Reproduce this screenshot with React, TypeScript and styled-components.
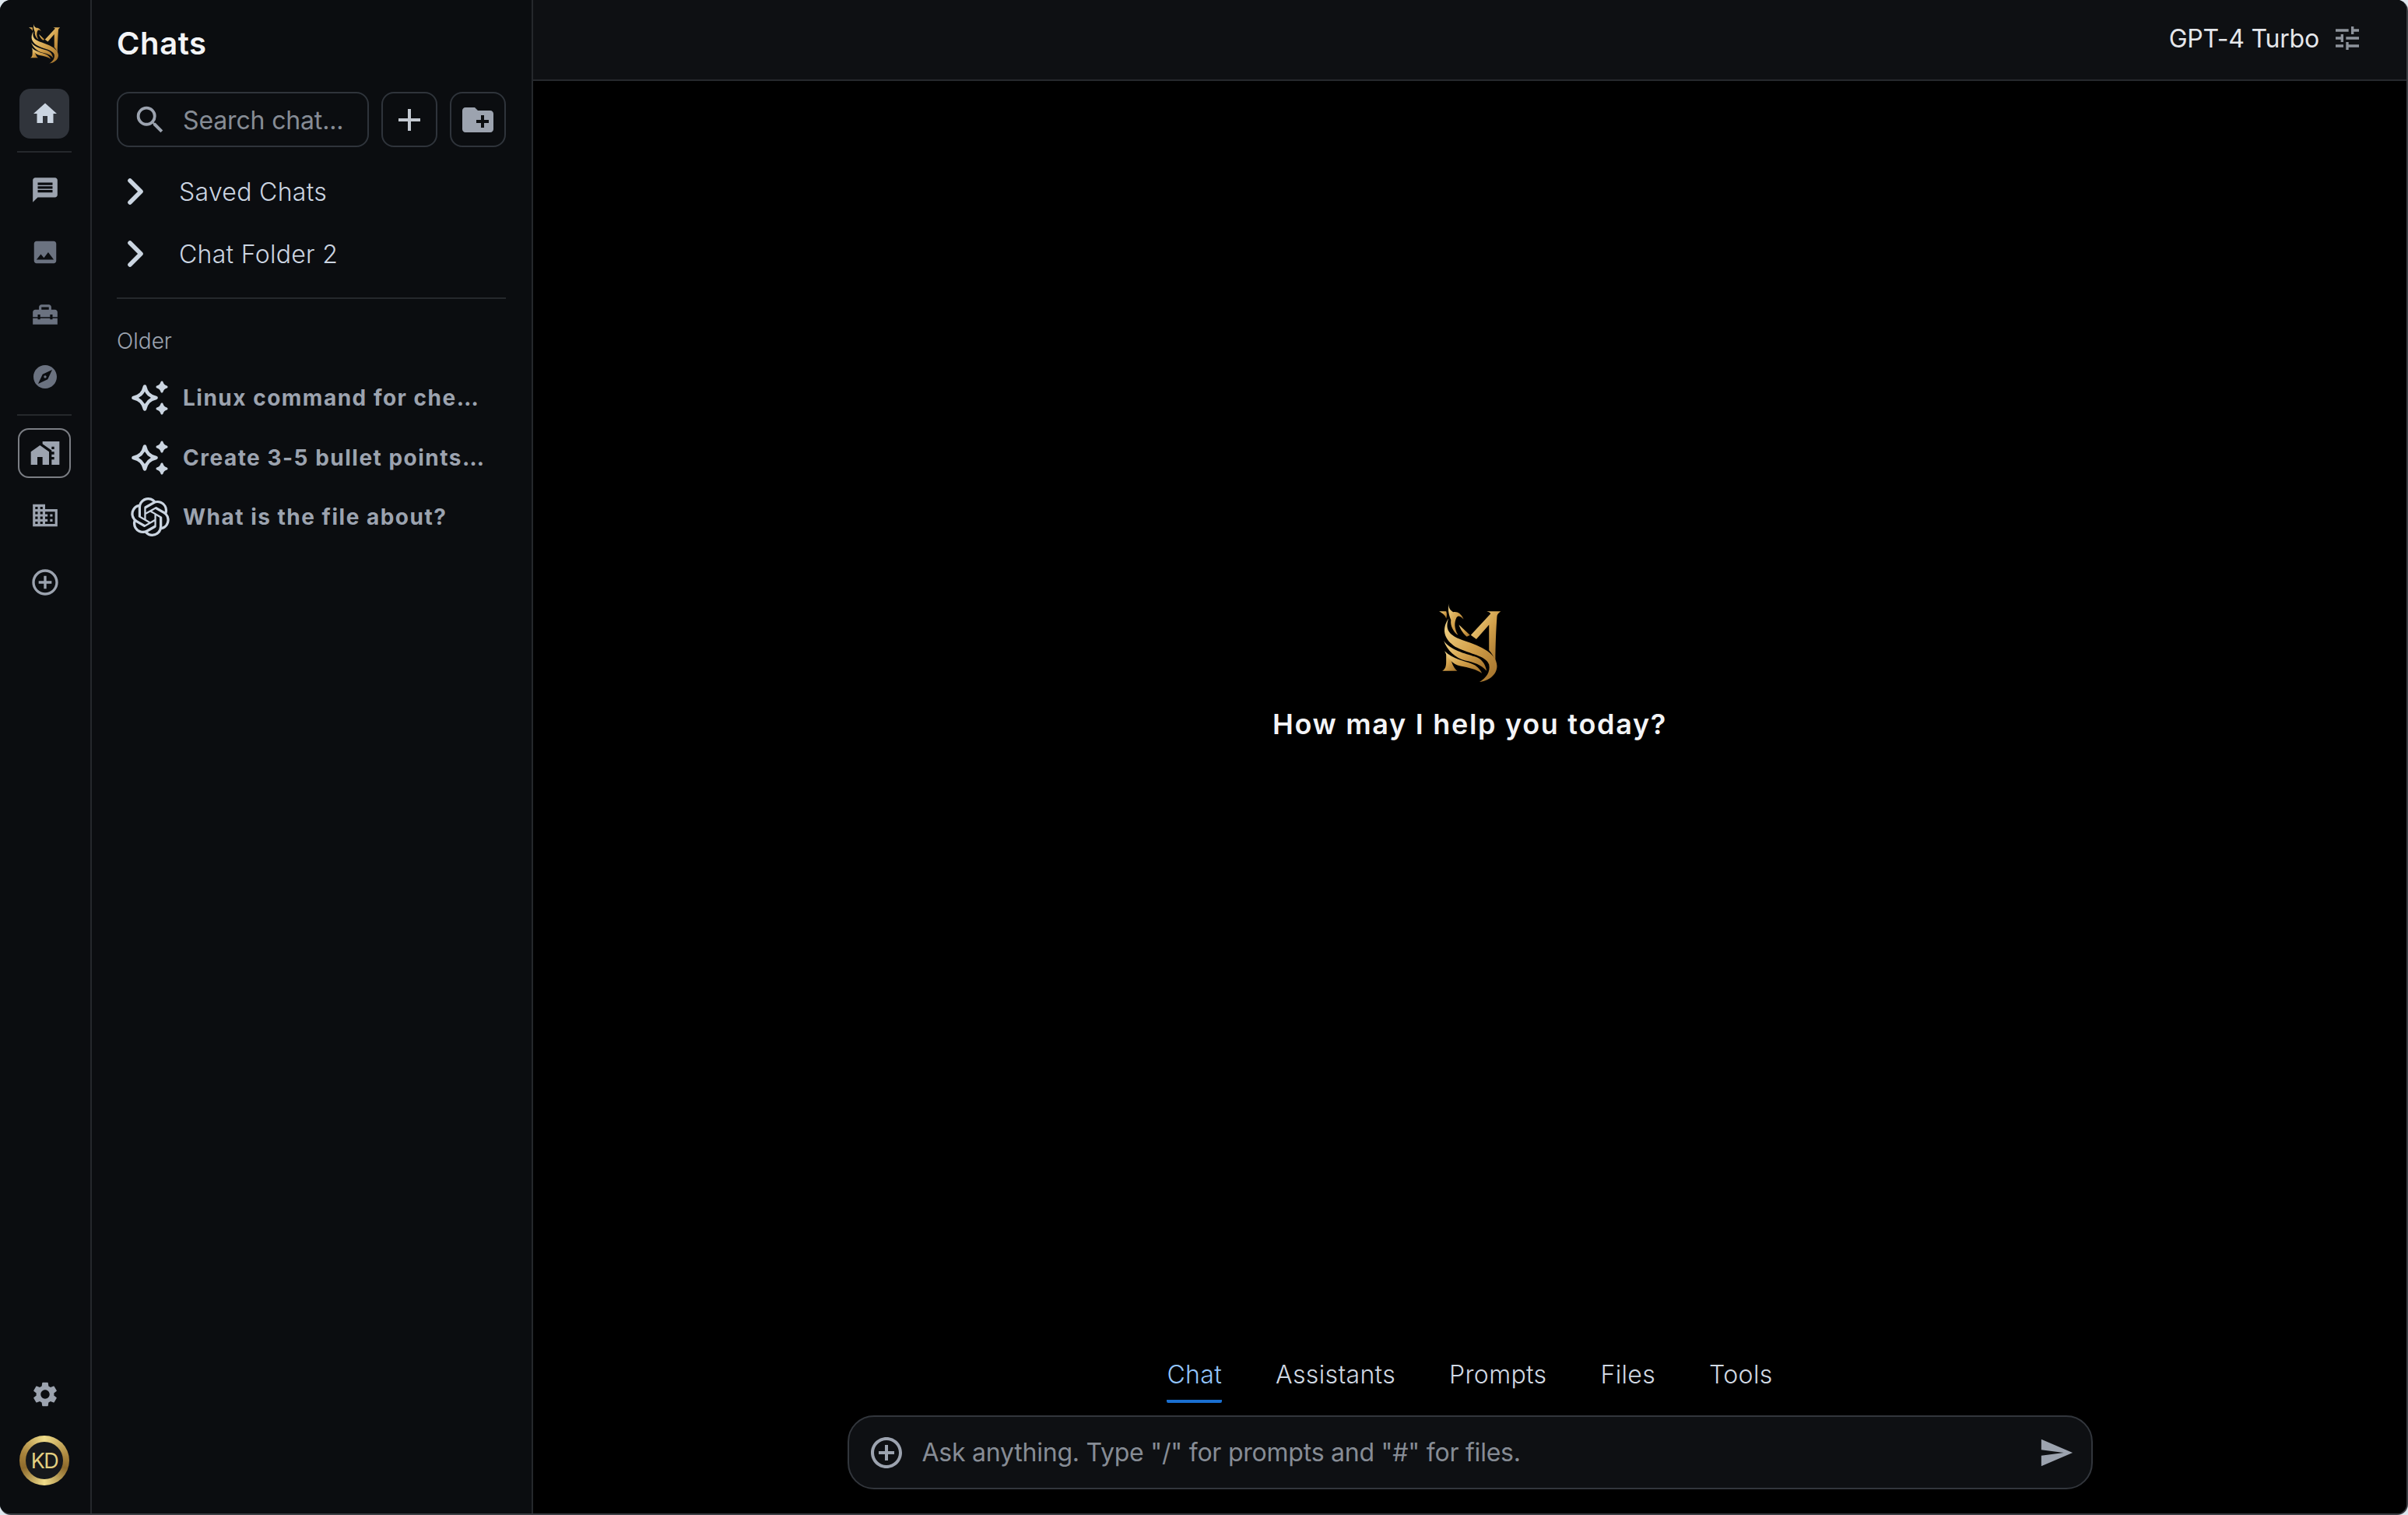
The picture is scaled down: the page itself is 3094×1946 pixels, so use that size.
import React from "react";
import styled, { createGlobalStyle } from "styled-components";
import {
  MdHome,
  MdMessage,
  MdImage,
  MdHomeRepairService,
  MdExplore,
  MdHomeWork,
  MdOutlineDomain,
  MdAddCircleOutline,
  MdSettings,
  MdSearch,
  MdAdd,
  MdCreateNewFolder,
  MdOutlineTune,
  MdSend,
} from "react-icons/md";
import { SiOpenai } from "react-icons/si";
import { ChevronRight } from "lucide-react";

const GlobalStyle = createGlobalStyle`
  html, body { margin: 0; padding: 0; background: #dfe7ee; }
  * { box-sizing: border-box; }
  body { font-family: Inter, "Noto Sans", "Liberation Sans", sans-serif; }
`;

const Frame = styled.div`
  width: 3094px;
  height: 1946px;
  display: flex;
  overflow: hidden;
  background: #000;
  border-radius: 14px;
  border-right: 2px solid #3b3e43;
  border-bottom: 2px solid #3b3e43;
`;

const Rail = styled.nav`
  width: 118px;
  flex: none;
  display: flex;
  flex-direction: column;
  align-items: center;
  background: #0b0d10;
  border-right: 2px solid #25282c;
  padding: 30px 2px 36px 0;
`;

const RailLogo = styled.div`
  height: 52px;
  margin-bottom: 32px;
  display: flex;
`;

const RailButton = styled.div<{ $tone?: string; $mode?: "filled" | "outlined" }>`
  width: ${(p) => (p.$mode === "outlined" ? "68px" : "64px")};
  height: 64px;
  flex: none;
  display: flex;
  align-items: center;
  justify-content: center;
  padding-left: 2px;
  border-radius: 14px;
  color: ${(p) => p.$tone || "#9ca3af"};
  background: ${(p) => (p.$mode === "filled" ? "#30343b" : "transparent")};
  border: ${(p) => (p.$mode === "outlined" ? "2px solid #7b7e84" : "none")};
`;

const AddRailButton = styled(RailButton)`
  margin-top: 6px;
`;

const RailGroup = styled.div<{ $gap: number }>`
  display: flex;
  flex-direction: column;
  align-items: center;
  gap: ${(p) => p.$gap}px;
`;

const RailRule = styled.div`
  width: 70px;
  height: 2px;
  flex: none;
  background: #25282c;
  margin: 16px 0;
`;

const RailSpacer = styled.div`
  flex: 1;
`;

const Avatar = styled.div`
  width: 64px;
  height: 64px;
  margin-top: 21px;
  border-radius: 50%;
  padding: 8px;
  display: flex;
  background: conic-gradient(#efdc8a 0deg, #a9843c 80deg, #8d6a2c 110deg, #efdc8a 180deg, #8d6a2c 250deg, #a9843c 290deg, #efdc8a 360deg);
`;

const AvatarInner = styled.div`
  flex: 1;
  border-radius: 50%;
  background: #16181b;
  color: #e2cf80;
  font-size: 27px;
  letter-spacing: -1.5px;
  display: flex;
  align-items: center;
  justify-content: center;
`;

const Sidebar = styled.aside`
  width: 567px;
  flex: none;
  display: flex;
  flex-direction: column;
  background: #0b0d10;
  border-right: 2px solid #25282c;
  padding: 31px 33px 0 32px;
`;

const SideTitle = styled.h1`
  margin: 0 0 37px;
  font-size: 40px;
  line-height: 50px;
  font-weight: 600;
  letter-spacing: 0.6px;
  color: #f3f4f6;
`;

const SearchRow = styled.div`
  display: flex;
  gap: 16px;
  margin-bottom: 25px;
`;

const SearchBox = styled.div`
  flex: 1;
  height: 71px;
  border: 2px solid #2f343b;
  border-radius: 16px;
  display: flex;
  align-items: center;
  padding: 1px 0 0 18px;
  gap: 19px;
  color: #9ca3af;
`;

const SearchText = styled.span`
  font-size: 32px;
  font-weight: 400;
  letter-spacing: -0.15px;
  color: #868c95;
`;

const SquareButton = styled.div<{ $tone?: string }>`
  width: 72px;
  height: 71px;
  flex: none;
  border: 2px solid #2f343b;
  border-radius: 16px;
  display: flex;
  align-items: center;
  justify-content: center;
  color: ${(p) => p.$tone || "#9ca3af"};
`;

const FolderList = styled.div`
  display: flex;
  flex-direction: column;
  gap: 16px;
`;

const FolderRow = styled.div`
  height: 64px;
  display: flex;
  align-items: center;
  gap: 28px;
  color: #cbd5e1;
  font-size: 32px;
  font-weight: 300;
  letter-spacing: 0.3px;
`;

const FolderChevron = styled(ChevronRight)`
  flex: none;
  margin-left: -4px;
`;

const SideRule = styled.div`
  height: 2px;
  flex: none;
  background: #25282c;
  margin: 24px 0 36px;
`;

const GroupLabel = styled.div`
  font-size: 28px;
  line-height: 36px;
  font-weight: 300;
  color: #9ca3af;
  margin-bottom: 23px;
`;

const ChatList = styled.div`
  display: flex;
  flex-direction: column;
  gap: 12.5px;
`;

const ChatRow = styled.div`
  height: 64px;
  display: flex;
  align-items: center;
  padding-left: 18px;
  gap: 17px;
`;

const ChatIconSlot = styled.div`
  width: 50px;
  height: 50px;
  flex: none;
  display: flex;
  align-items: center;
  justify-content: center;
  color: #cbd5e1;
`;

const ChatName = styled.span`
  font-size: 28px;
  font-weight: 700;
  letter-spacing: 1.5px;
  color: #9ca3af;
  white-space: nowrap;
`;

const Main = styled.main`
  flex: 1;
  min-width: 0;
  display: flex;
  flex-direction: column;
  background: #000;
`;

const TopBar = styled.header`
  height: 104px;
  flex: none;
  display: flex;
  align-items: center;
  justify-content: flex-end;
  gap: 16px;
  padding: 0 56px 4px 0;
  background: #0e1013;
  border-bottom: 2px solid #26292d;
`;

const ModelName = styled.span`
  font-size: 32px;
  font-weight: 400;
  letter-spacing: -0.2px;
  color: #e5e7eb;
`;

const TuneIcon = styled.span`
  display: flex;
  color: #8d939b;
`;

const Welcome = styled.section`
  flex: 1;
  display: flex;
  flex-direction: column;
  align-items: center;
  justify-content: center;
  padding-bottom: 124px;
`;

const WelcomeLogo = styled.div`
  height: 102px;
  margin-bottom: 31px;
  display: flex;
`;

const WelcomeText = styled.h2`
  margin: 0;
  font-size: 36px;
  line-height: 44px;
  font-weight: 600;
  letter-spacing: 1.7px;
  color: #f3f4f6;
`;

const Composer = styled.footer`
  display: flex;
  flex-direction: column;
  align-items: center;
  padding-bottom: 31px;
`;

const Tabs = styled.div`
  display: flex;
  gap: 69px;
  margin-bottom: 16px;
`;

const Tab = styled.div<{ $active?: boolean }>`
  position: relative;
  padding-bottom: 12px;
  font-size: 32px;
  line-height: 40px;
  font-weight: 300;
  letter-spacing: 0.35px;
  color: ${(p) => (p.$active ? "#93c5fd" : "#d1d9e3")};
  border-bottom: 4px solid ${(p) => (p.$active ? "#1a6fd0" : "transparent")};
  border-radius: 0 0 2px 2px;
`;

const InputBar = styled.div`
  width: 1600px;
  height: 95px;
  display: flex;
  align-items: center;
  padding: 0 22px 0 24px;
  background: #0e1013;
  border: 2px solid #32363c;
  border-radius: 34px;
  color: #9ca3af;
`;

const Placeholder = styled.span`
  flex: 1;
  margin-left: 22px;
  font-size: 32px;
  font-weight: 400;
  letter-spacing: -0.23px;
  color: #868c95;
`;

const Logo: React.FC<{ id: string; height: number }> = ({ id, height }) => (
  <svg viewBox="11 9 78 100" height={height} width={height * 0.78} aria-hidden="true">
    <defs>
      <linearGradient id={id} x1="0" y1="0" x2="1" y2="1">
        <stop offset="0" stopColor="#f3d68a" />
        <stop offset="0.5" stopColor="#d2a04a" />
        <stop offset="1" stopColor="#a06f2a" />
      </linearGradient>
    </defs>
    <g fill={`url(#${id})`}>
      <path d="M51 49 L76 22 C75 20 73 19.5 71 19 L89 19 C86 21 84 23 84 26 C83 40 82 62 82 82 C80 76 77 71 74 68 L74 36 L58 54 Z" />
      <path d="M11 19 L20 19 C21 22 21 25 20 28 C19 24 15 21 11 19 Z" />
      <path d="M20 72 C22 76 25 78 26 80 C28 86 30 91 34 94 L15 94 C19 92 20 88 20 82 Z" />
      <path d="M24 9 C22 15 26 18 29 20 C34 19 39 22 42 29 C38 25 35 24 33 27 C30 33 30 41 35 49 C29 45 25 37 26 30 C24 25 21 17 24 9 Z" />
      <path d="M36 36 L50 49 L46 51 C42 48 38 42 36 36 Z" />
      <path d="M23 28 C18 42 24 49 40 55 C58 61 84 70 84 88 C84 100 72 107 62 108 C70 103 76 96 74 86 C70 75 50 73 34 65 C20 57 12 44 23 28 Z" />
      <path d="M17 56 C25 68 44 72 56 76 C65 79 69 85 71 94 C64 86 54 83 44 81 C32 78 21 68 17 56 Z" />
      <path d="M18 69 C28 79 42 81 52 85 C58 87 63 92 65 97 C58 92 48 90 38 88 C28 86 22 78 18 69 Z" />
    </g>
  </svg>
);

const Sparkles: React.FC = () => (
  <svg viewBox="0 0 48 48" width="48" height="48" aria-hidden="true">
    <path
      d="M17 9.5 C19 18 23 22 31.5 24 C23 26 19 30 17 38.5 C15 30 11 26 2.5 24 C11 22 15 18 17 9.5 Z"
      fill="none"
      stroke="currentColor"
      strokeWidth="4.6"
      strokeLinejoin="round"
    />
    <path
      d="M39 4 C40 7.5 41.5 9 45 10 C41.5 11 40 12.5 39 16 C38 12.5 36.5 11 33 10 C36.5 9 38 7.5 39 4 Z"
      fill="currentColor"
      stroke="currentColor"
      strokeWidth="3"
      strokeLinejoin="round"
    />
    <path
      d="M39 32 C40 35.5 41.5 37 45 38 C41.5 39 40 40.5 39 44 C38 40.5 36.5 39 33 38 C36.5 37 38 35.5 39 32 Z"
      fill="currentColor"
      stroke="currentColor"
      strokeWidth="3"
      strokeLinejoin="round"
    />
  </svg>
);

const folders = ["Saved Chats", "Chat Folder 2"];
const chats = [
  { name: "Linux command for che…", kind: "sparkles" },
  { name: "Create 3-5 bullet points…", kind: "sparkles" },
  { name: "What is the file about?", kind: "openai" },
];
const tabs = ["Chat", "Assistants", "Prompts", "Files", "Tools"];

export default function App() {
  return (
    <>
      <GlobalStyle />
      <Frame>
        <Rail>
          <RailLogo>
            <Logo id="goldRail" height={52} />
          </RailLogo>
          <RailButton $mode="filled" $tone="#cbd5e1">
            <MdHome size={36} />
          </RailButton>
          <RailRule />
          <RailGroup $gap={16}>
            <RailButton>
              <MdMessage size={38} />
            </RailButton>
            <RailButton $tone="#6b7280">
              <MdImage size={38} />
            </RailButton>
            <RailButton $tone="#6b7280">
              <MdHomeRepairService size={38} />
            </RailButton>
            <RailButton $tone="#6b7280">
              <MdExplore size={36} />
            </RailButton>
          </RailGroup>
          <RailRule />
          <RailGroup $gap={16}>
            <RailButton $mode="outlined">
              <MdHomeWork size={40} />
            </RailButton>
            <RailButton>
              <MdOutlineDomain size={38} />
            </RailButton>
            <AddRailButton>
              <MdAddCircleOutline size={40} />
            </AddRailButton>
          </RailGroup>
          <RailSpacer />
          <RailButton>
            <MdSettings size={38} />
          </RailButton>
          <Avatar>
            <AvatarInner>KD</AvatarInner>
          </Avatar>
        </Rail>
        <Sidebar>
          <SideTitle>Chats</SideTitle>
          <SearchRow>
            <SearchBox>
              <MdSearch size={46} />
              <SearchText>Search chat...</SearchText>
            </SearchBox>
            <SquareButton $tone="#c3c9d1">
              <MdAdd size={48} />
            </SquareButton>
            <SquareButton>
              <MdCreateNewFolder size={48} />
            </SquareButton>
          </SearchRow>
          <FolderList>
            {folders.map((f) => (
              <FolderRow key={f}>
                <FolderChevron size={56} strokeWidth={2.4} />
                {f}
              </FolderRow>
            ))}
          </FolderList>
          <SideRule />
          <GroupLabel>Older</GroupLabel>
          <ChatList>
            {chats.map((c) => (
              <ChatRow key={c.name}>
                <ChatIconSlot>
                  {c.kind === "sparkles" ? <Sparkles /> : <SiOpenai size={54} />}
                </ChatIconSlot>
                <ChatName>{c.name}</ChatName>
              </ChatRow>
            ))}
          </ChatList>
        </Sidebar>
        <Main>
          <TopBar>
            <ModelName>GPT-4 Turbo</ModelName>
            <TuneIcon>
              <MdOutlineTune size={40} />
            </TuneIcon>
          </TopBar>
          <Welcome>
            <WelcomeLogo>
              <Logo id="goldMain" height={102} />
            </WelcomeLogo>
            <WelcomeText>How may I help you today?</WelcomeText>
          </Welcome>
          <Composer>
            <Tabs>
              {tabs.map((t, i) => (
                <Tab key={t} $active={i === 0}>
                  {t}
                </Tab>
              ))}
            </Tabs>
            <InputBar>
              <MdAddCircleOutline size={48} />
              <Placeholder>Ask anything. Type "/" for prompts and "#" for files.</Placeholder>
              <MdSend size={46} />
            </InputBar>
          </Composer>
        </Main>
      </Frame>
    </>
  );
}
